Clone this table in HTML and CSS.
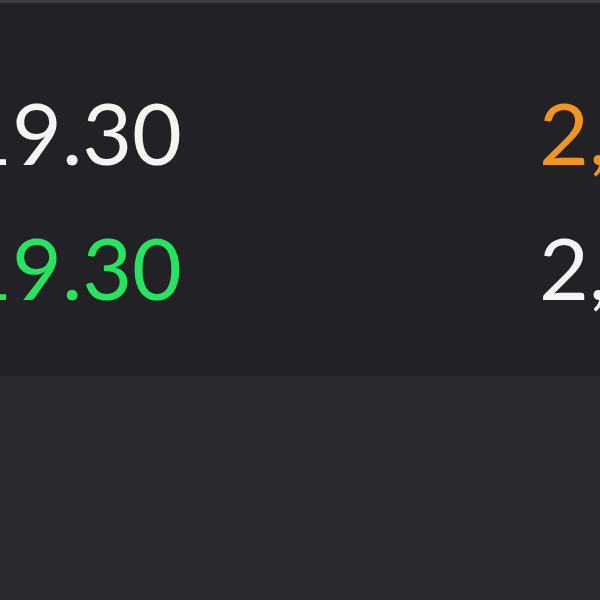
FILE: index.html
```html
<!DOCTYPE html>
<html lang="en">
<head>
    <meta charset="UTF-8">
    <meta name="viewport" content="width=device-width, initial-scale=1.0">
    <title>Book</title>
    <link rel="stylesheet" href="styles.css">
</head>
<body>

    <div class="top-bar"></div>

    <section class="book">
        <div class="book-row">
            <div class="price">19.30</div>
            <div class="qty qty-hot">2,481</div>
        </div>
        <div class="book-row">
            <div class="price price-up">19.30</div>
            <div class="qty">2,146</div>
        </div>
    </section>

</body>
</html>
```

FILE: styles.css
```css
body {
    margin: 0;
    background: #2a2a2f;
    font-family: 'Lato', 'Noto Sans', sans-serif;
    color: #f4f4f4;
    overflow: hidden;
    min-height: 100vh;
}

.top-bar {
    height: 3px;
    background: #3c3c43;
}

.book {
    background: #222226;
    padding: 61px 0 42px;
}

.book-row {
    display: grid;
    grid-template-columns: 182px 1fr;
    column-gap: 357px;
    font-size: 86px;
    line-height: 135px;
    white-space: nowrap;
}

.price {
    display: flex;
    justify-content: flex-end;
}

.price-up {
    color: #27e35f;
}

.qty-hot {
    color: #f39420;
}
```
